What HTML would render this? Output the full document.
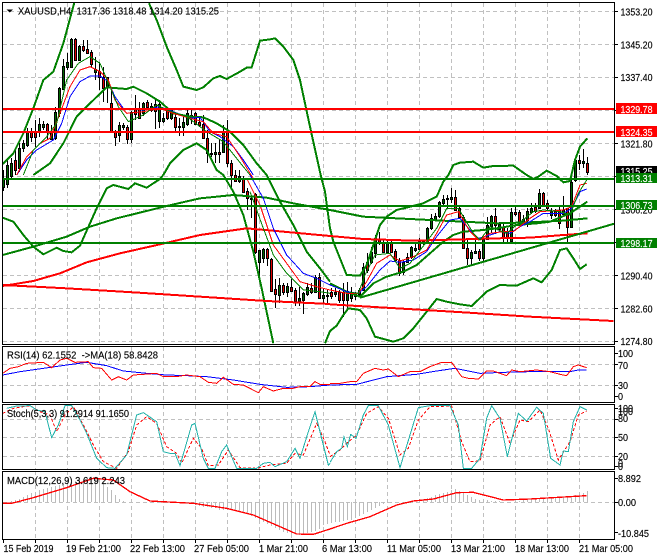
<!DOCTYPE html>
<html><head><meta charset="utf-8"><title>XAUUSD,H4</title>
<style>
html,body{margin:0;padding:0;background:#fff}
svg{display:block}
text{font-family:"Liberation Sans",sans-serif;font-size:10.5px;fill:#000;stroke:#000;stroke-width:.15px}
text.w{fill:#fff;stroke:#fff}
</style></head><body>
<svg xmlns="http://www.w3.org/2000/svg" width="660" height="560" viewBox="0 0 660 560">
<defs>
<clipPath id="cm"><rect x="3" y="3" width="611" height="341"/></clipPath>
<clipPath id="cr"><rect x="3" y="347" width="611" height="55"/></clipPath>
<clipPath id="cs"><rect x="3" y="405" width="611" height="64"/></clipPath>
<clipPath id="cd"><rect x="3" y="471" width="611" height="68"/></clipPath>
</defs>
<rect width="660" height="560" fill="#fff"/>
<!-- grid -->
<g stroke="#c0c0c0" stroke-width="1" stroke-dasharray="4 3" shape-rendering="crispEdges" fill="none">
<path d="M3 11.5H614M3 44.5H614M3 77.5H614M3 110.5H614M3 143.5H614M3 176.5H614M3 209.5H614M3 242.5H614M3 275.5H614M3 308.5H614M3 341.5H614"/>
<path d="M3 364.5H614M3 385.5H614M3 419.5H614M3 437.5H614M3 456.5H614M3 502.5H614"/>
<path d="M35.5 3V344M67.5 3V344M99.5 3V344M131.5 3V344M163.5 3V344M195.5 3V344M227.5 3V344M259.5 3V344M291.5 3V344M323.5 3V344M355.5 3V344M387.5 3V344M419.5 3V344M451.5 3V344M483.5 3V344M515.5 3V344M547.5 3V344M579.5 3V344"/>
<path d="M35.5 347V402M67.5 347V402M99.5 347V402M131.5 347V402M163.5 347V402M195.5 347V402M227.5 347V402M259.5 347V402M291.5 347V402M323.5 347V402M355.5 347V402M387.5 347V402M419.5 347V402M451.5 347V402M483.5 347V402M515.5 347V402M547.5 347V402M579.5 347V402"/>
<path d="M35.5 405V469M67.5 405V469M99.5 405V469M131.5 405V469M163.5 405V469M195.5 405V469M227.5 405V469M259.5 405V469M291.5 405V469M323.5 405V469M355.5 405V469M387.5 405V469M419.5 405V469M451.5 405V469M483.5 405V469M515.5 405V469M547.5 405V469M579.5 405V469"/>
<path d="M35.5 471V539M67.5 471V539M99.5 471V539M131.5 471V539M163.5 471V539M195.5 471V539M227.5 471V539M259.5 471V539M291.5 471V539M323.5 471V539M355.5 471V539M387.5 471V539M419.5 471V539M451.5 471V539M483.5 471V539M515.5 471V539M547.5 471V539M579.5 471V539"/>
</g>
<g clip-path="url(#cm)">
<!-- wicks -->
<path shape-rendering="crispEdges" stroke="#000" stroke-width="1" fill="none" d="M3.5 170V191M7.5 160V188M11.5 158V178M15.5 150V175M19.5 143V172M23.5 140V152M27.5 128V147M31.5 128V142M35.5 120V147M39.5 118V137M43.5 121V130M47.5 123V140M51.5 125V140M55.5 107V140M59.5 87V117M63.5 59V90M67.5 53V70M71.5 38V68M75.5 38V61M79.5 45V61M83.5 40V52M87.5 40V54M91.5 50V68M95.5 57V80M99.5 62V90M103.5 67V102M107.5 77V103M111.5 87V132M115.5 130V146M119.5 122V142M123.5 123V130M127.5 125V144M131.5 111V143M135.5 95V120M139.5 102V119M143.5 102V116M147.5 100V110M151.5 103V112M155.5 100V129M159.5 100V128M163.5 113V123M167.5 108V120M171.5 108V120M175.5 113V133M179.5 118V136M183.5 117V136M187.5 110V126M191.5 110V124M195.5 112V125M199.5 117V127M203.5 115V138M207.5 130V163M211.5 143V157M215.5 143V163M219.5 140V163M223.5 125V153M227.5 120V167M231.5 160V188M235.5 170V182M239.5 170V183M243.5 176V193M247.5 188V210M251.5 195V218M255.5 193V254M259.5 250V278M263.5 248V263M267.5 248V266M271.5 258V292M275.5 279V308M279.5 278V303M283.5 283V295M287.5 283V297M291.5 279V292M295.5 288V306M299.5 287V306M303.5 292V314M307.5 283V296M311.5 283V294M315.5 275V293M319.5 273V299M323.5 288V304M327.5 290V304M331.5 288V299M335.5 288V297M339.5 290V303M343.5 283V317M347.5 282V308M351.5 287V302M355.5 292V300M359.5 288V296M363.5 263V291M367.5 253V273M371.5 247V264M375.5 235V258M379.5 232V245M383.5 240V253M387.5 240V253M391.5 240V253M395.5 249V262M399.5 258V276M403.5 260V275M407.5 253V263M411.5 246V259M415.5 244V252M419.5 238V250M423.5 240V245M427.5 227V244M431.5 214V230M435.5 213V221M439.5 201V218M443.5 195V207M447.5 195V208M451.5 188V203M455.5 190V211M459.5 207V219M463.5 215V249M467.5 240V265M471.5 250V265M475.5 240V254M479.5 249V261M483.5 237V261M487.5 217V240M491.5 215V233M495.5 208V234M499.5 222V232M503.5 224V243M507.5 228V243M511.5 208V243M515.5 207V216M519.5 210V226M523.5 215V225M527.5 208V227M531.5 203V214M535.5 203V213M539.5 189V209M543.5 192V207M547.5 200V211M551.5 208V219M555.5 209V217M559.5 207V229M563.5 196V216M567.5 208V242M571.5 177V228M575.5 159V182M579.5 155V170M583.5 149V168M587.5 157V175"/>
<!-- up bodies -->
<path shape-rendering="crispEdges" stroke="#000" stroke-width="1" fill="#006400" d="M2.5 179.5h2v8h-2zM6.5 165.5h2v19h-2zM10.5 163.5h2v13h-2zM18.5 148.5h2v20h-2zM22.5 143.5h2v5h-2zM26.5 131.5h2v14h-2zM38.5 124.5h2v8h-2zM42.5 124.5h2v3h-2zM50.5 131.5h2v8h-2zM54.5 112.5h2v26h-2zM58.5 88.5h2v25h-2zM62.5 66.5h2v23h-2zM66.5 62.5h2v5h-2zM70.5 39.5h2v28h-2zM78.5 46.5h2v14h-2zM94.5 69.5h2v3h-2zM106.5 77.5h2v10h-2zM118.5 125.5h2v10h-2zM122.5 125.5h2v2h-2zM130.5 112.5h2v27h-2zM142.5 103.5h2v10h-2zM150.5 106.5h2v4h-2zM158.5 104.5h2v17h-2zM162.5 118.5h2v3h-2zM170.5 110.5h2v8h-2zM178.5 126.5h2v1h-2zM182.5 122.5h2v5h-2zM186.5 113.5h2v11h-2zM190.5 115.5h2v2h-2zM210.5 153.5h2v1h-2zM214.5 152.5h2v2h-2zM222.5 132.5h2v20h-2zM238.5 176.5h2v5h-2zM250.5 198.5h2v1h-2zM258.5 250.5h2v12h-2zM262.5 249.5h2v9h-2zM278.5 285.5h2v10h-2zM286.5 286.5h2v6h-2zM298.5 298.5h2v3h-2zM302.5 293.5h2v7h-2zM306.5 287.5h2v7h-2zM314.5 277.5h2v15h-2zM322.5 295.5h2v3h-2zM326.5 295.5h2v1h-2zM334.5 292.5h2v2h-2zM346.5 291.5h2v9h-2zM350.5 292.5h2v6h-2zM354.5 294.5h2v2h-2zM358.5 290.5h2v4h-2zM362.5 267.5h2v23h-2zM370.5 252.5h2v10h-2zM374.5 238.5h2v15h-2zM386.5 243.5h2v9h-2zM402.5 262.5h2v10h-2zM406.5 257.5h2v5h-2zM410.5 247.5h2v10h-2zM414.5 248.5h2v2h-2zM422.5 241.5h2v2h-2zM426.5 228.5h2v15h-2zM430.5 218.5h2v10h-2zM434.5 216.5h2v4h-2zM438.5 202.5h2v14h-2zM442.5 199.5h2v4h-2zM446.5 198.5h2v1h-2zM450.5 197.5h2v2h-2zM470.5 252.5h2v6h-2zM474.5 251.5h2v2h-2zM482.5 239.5h2v19h-2zM486.5 225.5h2v14h-2zM490.5 216.5h2v10h-2zM498.5 224.5h2v5h-2zM510.5 212.5h2v29h-2zM522.5 219.5h2v4h-2zM526.5 211.5h2v9h-2zM530.5 208.5h2v4h-2zM538.5 193.5h2v15h-2zM550.5 211.5h2v4h-2zM562.5 210.5h2v4h-2zM570.5 182.5h2v45h-2zM574.5 160.5h2v20h-2zM582.5 161.5h2v2h-2z"/>
<!-- down bodies -->
<path shape-rendering="crispEdges" stroke="#000" stroke-width="1" fill="#e00000" d="M14.5 160.5h2v10h-2zM30.5 131.5h2v6h-2zM34.5 132.5h2v5h-2zM46.5 124.5h2v8h-2zM74.5 39.5h2v21h-2zM82.5 46.5h2v4h-2zM86.5 49.5h2v4h-2zM90.5 52.5h2v12h-2zM98.5 71.5h2v6h-2zM102.5 77.5h2v11h-2zM110.5 103.5h2v28h-2zM114.5 131.5h2v6h-2zM126.5 127.5h2v12h-2zM134.5 108.5h2v6h-2zM138.5 108.5h2v10h-2zM146.5 102.5h2v5h-2zM154.5 104.5h2v7h-2zM166.5 109.5h2v9h-2zM174.5 117.5h2v10h-2zM194.5 113.5h2v11h-2zM198.5 122.5h2v3h-2zM202.5 124.5h2v14h-2zM206.5 138.5h2v15h-2zM218.5 152.5h2v2h-2zM226.5 132.5h2v31h-2zM230.5 163.5h2v12h-2zM234.5 175.5h2v6h-2zM242.5 178.5h2v14h-2zM246.5 191.5h2v7h-2zM254.5 194.5h2v58h-2zM266.5 249.5h2v9h-2zM270.5 259.5h2v32h-2zM274.5 289.5h2v5h-2zM282.5 285.5h2v7h-2zM290.5 287.5h2v4h-2zM294.5 290.5h2v11h-2zM310.5 288.5h2v4h-2zM318.5 277.5h2v21h-2zM330.5 292.5h2v4h-2zM338.5 292.5h2v8h-2zM342.5 292.5h2v8h-2zM366.5 262.5h2v8h-2zM378.5 239.5h2v4h-2zM382.5 243.5h2v9h-2zM390.5 243.5h2v9h-2zM394.5 251.5h2v9h-2zM398.5 260.5h2v13h-2zM418.5 241.5h2v8h-2zM454.5 197.5h2v13h-2zM458.5 208.5h2v9h-2zM462.5 217.5h2v31h-2zM466.5 248.5h2v10h-2zM478.5 251.5h2v7h-2zM494.5 216.5h2v9h-2zM502.5 227.5h2v11h-2zM506.5 232.5h2v6h-2zM514.5 212.5h2v2h-2zM518.5 212.5h2v11h-2zM534.5 207.5h2v4h-2zM542.5 193.5h2v12h-2zM546.5 203.5h2v5h-2zM554.5 211.5h2v4h-2zM558.5 210.5h2v13h-2zM566.5 208.5h2v19h-2zM578.5 160.5h2v3h-2zM586.5 163.5h2v9h-2z"/>
<!-- indicators -->
<g fill="none" shape-rendering="crispEdges">
<g transform="scale(.33333)">
<polyline stroke="#008000" stroke-width="6" points="8,492 40,460 70,400 100,325 130,240 160,215 190,130 225,0"/>
<polyline stroke="#008000" stroke-width="6" points="447,10 470,60 500,140 530,210 550,260 590,270 610,262 640,235 660,228 680,237 720,215 740,203 755,202 780,122 810,118 825,115 850,140 880,180 900,240 930,380 962,525 975,575 990,685"/>
<polyline stroke="#008000" stroke-width="6" points="100,525 150,490 190,430 230,350 270,310 320,262 380,267 400,260 440,280 480,305 520,340 570,350 610,352 650,370 690,395 730,435 770,490 800,525"/>
<polyline stroke="#008000" stroke-width="6" points="490,525 510,490 550,450 590,430 620,450 650,510 670,525"/>
<polyline stroke="#0000ff" stroke-width="3" points="50,525 80,480 110,450 160,420 185,370 210,290 240,245 270,228 300,228 325,245 345,290 370,325 430,330 480,320 520,335 570,355 600,352 630,395 660,410 700,440 730,480 760,525"/>
<polyline stroke="#ff0000" stroke-width="3" points="50,525 80,470 120,430 150,415 180,340 210,260 240,210 270,200 300,215 325,240 345,300 380,340 430,335 480,325 520,340 570,355 610,365 640,400 680,410 720,470 750,520 760,535"/>
<polyline stroke="#008000" stroke-width="3" points="70,525 100,450 140,410 170,370 200,240 235,190 270,170 300,190 330,260 355,320 385,365 430,345 470,315 500,330 560,350 620,395 670,425 730,500 750,525"/>
</g>
<g transform="translate(0,175) scale(.33333)">
<polyline stroke="#008000" stroke-width="6" points="8,128 40,140 70,180 100,215 130,238 170,218 190,228 215,232 240,212 290,100 320,40 340,30 385,42 405,25 440,38 480,12 490,0"/>
<polyline stroke="#008000" stroke-width="6" points="670,0 700,50 730,120 760,230 785,340 820,505"/>
<polyline stroke="#008000" stroke-width="6" points="800,0 840,80 880,150 920,230 960,280 990,320"/>
<polyline stroke="#008000" stroke-width="6" points="8,240 100,215 200,185 270,155 350,130 500,93 600,70 700,60 800,68 880,85 990,105"/>
<polyline stroke="#ff0000" stroke-width="6" points="8,333 100,318 180,295 260,262 360,235 480,208 600,180 740,160 850,170 990,183"/>
<polyline stroke="#ff0000" stroke-width="6" points="8,330 200,340 400,352 600,365 800,378 990,387"/>
<polyline stroke="#0000ff" stroke-width="3" points="750,0 790,70 820,160 860,240 910,295 950,310 990,330"/>
<polyline stroke="#ff0000" stroke-width="3" points="740,10 780,90 820,210 860,265 900,320 950,335 990,345"/>
<polyline stroke="#008000" stroke-width="3" points="750,50 790,160 820,240 860,295 910,345 960,350 990,355"/>
</g>
<g transform="translate(330,0) scale(.33333)">
<polyline stroke="#008000" stroke-width="6" points="0,685 10,725 30,775 50,825 90,827 110,795 130,735 150,675 170,650 200,630 240,620 280,610 320,590 340,545 355,525 370,495 390,488 430,485 460,503 490,498 550,497 590,525 610,537 625,530 650,512 680,528 700,547 720,543 735,480 750,440 772,415"/>
</g>
<g transform="translate(330,175) scale(.33333)">
<polyline stroke="#008000" stroke-width="6" points="-15,505 0,468 20,452 40,420 55,400 90,405 110,430 135,485 190,500 220,490 250,460 290,410 320,372 350,380 390,388 425,393 470,350 510,330 560,332 610,310 635,322 665,285 690,225 710,220 730,250 750,282 770,268"/>
<polyline stroke="#008000" stroke-width="6" points="0,325 50,350 90,365 130,325 170,305 220,290 260,270 300,235 340,200 370,180 400,170 460,165 500,160 560,150 620,145 660,140 720,115 772,80"/>
<polyline stroke="#008000" stroke-width="6" points="0,105 100,125 200,130 300,135 400,140 500,145 600,142 700,137 772,130"/>
<polyline stroke="#ff0000" stroke-width="6" points="0,183 100,192 250,197 400,193 500,190 600,188 700,180 772,175"/>
<polyline stroke="#ff0000" stroke-width="6" points="0,388 200,400 400,412 600,425 850,438"/>
<polyline stroke="#008000" stroke-width="6" points="90,368 853,146"/>
<polyline stroke="#0000ff" stroke-width="3" points="0,330 50,350 85,355 110,335 150,285 180,258 210,262 250,255 290,230 320,185 360,135 390,130 420,165 445,190 480,180 510,170 540,175 570,155 600,140 640,115 700,115 725,100 750,50 770,42"/>
<polyline stroke="#ff0000" stroke-width="3" points="0,345 50,355 85,355 110,320 140,265 180,240 210,258 250,245 290,225 320,175 350,120 385,110 420,170 445,195 480,175 520,170 550,170 600,130 630,110 700,105 725,95 750,30 770,25"/>
<polyline stroke="#008000" stroke-width="3" points="60,352 85,355 105,300 135,240 180,235 210,280 240,265 290,200 320,160 350,100 385,100 430,175 450,195 480,155 530,175 560,150 610,110 640,105 690,110 720,120 745,55 770,15"/>
</g>
</g>
<!-- horizontal levels -->
<g shape-rendering="crispEdges" stroke-width="2" fill="none">
<path stroke="#ff0000" d="M3 109H614M3 132H614"/>
<path stroke="#008000" d="M3 179H614M3 206H614M3 243H614"/>
</g>
</g>
<!-- RSI -->
<g clip-path="url(#cr)" fill="none" shape-rendering="crispEdges">
<g transform="translate(0,345) scale(.33333)" stroke-width="3">
<polyline stroke="#0000ff" points="8,90 60,80 130,70 200,60 260,52 320,62 370,78 440,85 500,90 560,92 620,95 700,105 780,118 860,127 930,125 990,120"/>
<polyline stroke="#ff0000" points="8,85 30,70 55,65 80,55 130,52 155,68 180,45 200,40 225,52 265,50 280,68 305,70 335,105 355,95 380,105 400,90 430,88 470,85 490,95 530,95 560,90 600,95 625,112 650,115 670,97 700,118 730,120 775,143 790,125 820,138 850,130 880,130 900,125 930,125 945,110 960,118 990,118"/>
</g>
<g transform="translate(330,345) scale(.33333)" stroke-width="3">
<polyline stroke="#0000ff" points="0,120 80,118 170,95 260,88 320,78 375,70 450,85 520,82 600,80 720,80 745,75 770,75"/>
<polyline stroke="#ff0000" points="0,115 30,115 60,110 80,110 100,85 135,70 160,75 175,72 205,95 240,80 270,80 300,65 335,52 365,52 395,95 415,100 445,102 470,78 490,78 530,92 545,75 570,80 620,75 660,80 690,88 710,92 730,65 745,60 770,68"/>
</g>
</g>
<!-- Stoch -->
<g clip-path="url(#cs)" fill="none" shape-rendering="crispEdges">
<g transform="translate(0,345) scale(.33333)" stroke-width="3">
<polyline stroke="#ff0000" stroke-dasharray="9 6" points="8,205 40,190 90,182 120,200 150,210 170,260 195,210 220,185 250,240 280,300 310,350 350,370 385,320 410,240 440,215 470,235 500,305 530,325 545,355 580,280 605,310 625,362 655,360 685,315 720,368 770,370 810,360 860,355 885,325 910,330 950,235 975,290 990,330"/>
<polyline stroke="#20b2aa" points="20,190 50,183 90,182 110,195 135,200 155,278 175,240 195,182 215,182 240,225 260,265 290,340 320,368 345,370 380,330 410,210 430,203 470,230 490,320 510,325 525,325 540,362 575,240 585,235 610,340 625,370 645,370 665,320 680,300 710,370 770,370 790,355 810,352 825,365 860,350 885,310 900,340 925,260 945,200 965,280 985,360 990,355"/>
</g>
<g transform="translate(330,345) scale(.33333)" stroke-width="3">
<polyline stroke="#ff0000" stroke-dasharray="9 6" points="0,335 30,315 50,295 80,270 110,205 145,185 175,220 210,330 235,310 265,225 300,185 365,183 395,290 420,350 450,348 480,240 510,215 540,295 570,225 595,230 630,195 655,250 685,345 720,290 745,210 770,198"/>
<polyline stroke="#20b2aa" points="0,352 20,320 35,310 42,275 52,305 62,268 78,280 100,210 115,182 145,182 175,240 210,368 240,270 265,188 300,182 360,182 385,240 400,370 425,370 450,340 470,220 485,182 510,220 532,335 565,205 590,228 620,187 640,205 662,340 690,360 700,318 715,320 730,230 750,185 770,195"/>
</g>
</g>
<!-- MACD -->
<g clip-path="url(#cd)" fill="none" shape-rendering="crispEdges">
<path stroke="#bbbbbb" stroke-width="1" d="M11.5 502V501M15.5 502V500M19.5 502V499M23.5 502V497M27.5 502V495M31.5 502V493M35.5 502V492M39.5 502V490M43.5 502V489M47.5 502V488M51.5 502V487M55.5 502V486M59.5 502V485M63.5 502V484M67.5 502V483M71.5 502V482M75.5 502V481M79.5 502V480M83.5 502V479M87.5 502V478M91.5 502V478M95.5 502V478M99.5 502V478M103.5 502V482M107.5 502V487M111.5 502V490M115.5 502V495M119.5 502V499M123.5 502V501M191.5 502V503M195.5 502V505M199.5 502V506M203.5 502V507M207.5 502V507M211.5 502V508M215.5 502V508M219.5 502V510M223.5 502V510M227.5 502V510M231.5 502V510M235.5 502V511M239.5 502V512M243.5 502V513M247.5 502V514M251.5 502V516M255.5 502V518M259.5 502V520M263.5 502V522M267.5 502V524M271.5 502V526M275.5 502V528M279.5 502V530M283.5 502V532M287.5 502V533M291.5 502V534M295.5 502V534M299.5 502V535M303.5 502V534M307.5 502V533M311.5 502V532M315.5 502V531M319.5 502V529M323.5 502V525M327.5 502V524M331.5 502V523M335.5 502V522M339.5 502V522M343.5 502V521M347.5 502V520M351.5 502V520M355.5 502V518M359.5 502V516M363.5 502V514M367.5 502V512M371.5 502V510M375.5 502V508M379.5 502V506M383.5 502V504M387.5 502V503M391.5 502V503M395.5 502V503M423.5 502V499M427.5 502V498M431.5 502V497M435.5 502V495M439.5 502V494M443.5 502V493M447.5 502V492M451.5 502V490M455.5 502V489M459.5 502V491M463.5 502V493M467.5 502V495M471.5 502V497M475.5 502V499M479.5 502V500M483.5 502V500M487.5 502V500M491.5 502V501M495.5 502V501M499.5 502V501M515.5 502V501M519.5 502V501M523.5 502V500M527.5 502V499M531.5 502V499M535.5 502V498M539.5 502V498M543.5 502V498M547.5 502V498M551.5 502V498M555.5 502V497M559.5 502V497M563.5 502V497M567.5 502V497M571.5 502V496M575.5 502V495M579.5 502V494M583.5 502V493M587.5 502V491"/>
<g transform="translate(0,345) scale(.33333)" stroke-width="4" stroke="#ff0000">
<polyline points="8,475 35,475 100,458 200,428 280,400 340,405 390,440 450,468 580,475 680,490 760,510 840,545 890,567 940,568 990,552"/>
</g>
<g transform="translate(330,345) scale(.33333)" stroke-width="4" stroke="#ff0000">
<polyline points="0,552 50,535 120,515 200,480 250,468 310,462 380,443 430,442 520,465 600,462 770,452"/>
</g>
</g>
<!-- frames -->
<g shape-rendering="crispEdges" fill="none" stroke="#000" stroke-width="1">
<rect x="2.5" y="2.5" width="612" height="342"/>
<rect x="2.5" y="346.5" width="612" height="56"/>
<rect x="2.5" y="404.5" width="612" height="65"/>
<rect x="2.5" y="471.5" width="612" height="68"/>
<path d="M615 11.5h3M615 44.5h3M615 77.5h3M615 110.5h3M615 143.5h3M615 176.5h3M615 209.5h3M615 242.5h3M615 275.5h3M615 308.5h3M615 341.5h3M615 353.5h3M615 364.5h3M615 385.5h3M615 396.5h3M615 408.5h3M615 419.5h3M615 437.5h3M615 456.5h3M615 466.5h3M615 478.5h3M615 502.5h3M615 532.5h3"/>
<path d="M3.5 540v3M35.5 540v3M67.5 540v3M99.5 540v3M131.5 540v3M163.5 540v3M195.5 540v3M227.5 540v3M259.5 540v3M291.5 540v3M323.5 540v3M355.5 540v3M387.5 540v3M419.5 540v3M451.5 540v3M483.5 540v3M515.5 540v3M547.5 540v3M579.5 540v3"/>
</g>
<!-- header labels -->
<path d="M6.5 9.5h6.5l-3.25 3z" fill="#000"/>
<text x="18" y="14.5" textLength="201" lengthAdjust="spacingAndGlyphs" xml:space="preserve">XAUUSD,H4  1317.36 1318.48 1314.20 1315.25</text>
<text x="7" y="358.5" textLength="151" lengthAdjust="spacingAndGlyphs" xml:space="preserve">RSI(14) 62.1552  -&gt;MA(18) 58.8428</text>
<text x="7" y="417" textLength="122" lengthAdjust="spacingAndGlyphs">Stoch(5,3,3) 91.2914 91.1650</text>
<text x="7" y="484" textLength="118" lengthAdjust="spacingAndGlyphs">MACD(12,26,9) 3.619 2.243</text>
<!-- right axis -->
<text x="620.5" y="15.5" textLength="32" lengthAdjust="spacingAndGlyphs">1353.20</text>
<text x="620.5" y="48.5" textLength="32" lengthAdjust="spacingAndGlyphs">1345.20</text>
<text x="620.5" y="81" textLength="32" lengthAdjust="spacingAndGlyphs">1337.40</text>
<text x="620.5" y="147.5" textLength="32" lengthAdjust="spacingAndGlyphs">1321.80</text>
<text x="620.5" y="213.5" textLength="32" lengthAdjust="spacingAndGlyphs">1306.20</text>
<text x="620.5" y="279.5" textLength="32" lengthAdjust="spacingAndGlyphs">1290.40</text>
<text x="620.5" y="312.5" textLength="32" lengthAdjust="spacingAndGlyphs">1282.60</text>
<text x="620.5" y="345" textLength="32" lengthAdjust="spacingAndGlyphs">1274.80</text>
<g shape-rendering="crispEdges">
<rect x="616" y="103" width="41" height="11" fill="#ff0000"/>
<rect x="616" y="126" width="41" height="11" fill="#ff0000"/>
<rect x="616" y="166" width="41" height="8" fill="#000"/>
</g>
<text class="w" x="620.5" y="113" textLength="32" lengthAdjust="spacingAndGlyphs">1329.78</text>
<text class="w" x="620.5" y="136" textLength="32" lengthAdjust="spacingAndGlyphs">1324.35</text>
<text class="w" x="620.5" y="175" textLength="32" lengthAdjust="spacingAndGlyphs">1315.25</text>
<g shape-rendering="crispEdges">
<rect x="616" y="173" width="41" height="10" fill="#008000"/>
<rect x="616" y="200" width="41" height="10" fill="#008000"/>
<rect x="616" y="238" width="41" height="10" fill="#008000"/>
</g>
<text class="w" x="620.5" y="182" textLength="32" lengthAdjust="spacingAndGlyphs">1313.31</text>
<text class="w" x="620.5" y="209" textLength="32" lengthAdjust="spacingAndGlyphs">1306.73</text>
<text class="w" x="620.5" y="247" textLength="32" lengthAdjust="spacingAndGlyphs">1298.17</text>
<text x="618" y="357" textLength="15" lengthAdjust="spacingAndGlyphs">100</text>
<text x="618" y="369" textLength="10" lengthAdjust="spacingAndGlyphs">70</text>
<text x="618" y="389" textLength="10" lengthAdjust="spacingAndGlyphs">30</text>
<text x="618" y="400" textLength="5" lengthAdjust="spacingAndGlyphs">0</text>
<text x="618" y="412" textLength="15" lengthAdjust="spacingAndGlyphs">100</text>
<text x="618" y="415" textLength="15" lengthAdjust="spacingAndGlyphs">100</text>
<text x="618" y="422" textLength="10" lengthAdjust="spacingAndGlyphs">80</text>
<text x="618" y="441" textLength="10" lengthAdjust="spacingAndGlyphs">50</text>
<text x="618" y="460" textLength="10" lengthAdjust="spacingAndGlyphs">20</text>
<text x="618" y="467" textLength="5" lengthAdjust="spacingAndGlyphs">0</text>
<text x="618" y="470" textLength="5" lengthAdjust="spacingAndGlyphs">0</text>
<text x="618" y="482" textLength="23" lengthAdjust="spacingAndGlyphs">8.892</text>
<text x="618" y="506" textLength="18" lengthAdjust="spacingAndGlyphs">0.00</text>
<text x="618" y="537" textLength="31" lengthAdjust="spacingAndGlyphs">-10.845</text>
<!-- bottom axis -->
<text x="3.5" y="552" textLength="50" lengthAdjust="spacingAndGlyphs">15 Feb 2019</text>
<text x="66" y="552" textLength="55" lengthAdjust="spacingAndGlyphs">19 Feb 21:00</text>
<text x="130" y="552" textLength="55" lengthAdjust="spacingAndGlyphs">22 Feb 13:00</text>
<text x="194" y="552" textLength="55" lengthAdjust="spacingAndGlyphs">27 Feb 05:00</text>
<text x="259" y="552" textLength="49" lengthAdjust="spacingAndGlyphs">1 Mar 21:00</text>
<text x="322" y="552" textLength="50" lengthAdjust="spacingAndGlyphs">6 Mar 13:00</text>
<text x="387" y="552" textLength="54" lengthAdjust="spacingAndGlyphs">11 Mar 05:00</text>
<text x="451" y="552" textLength="54" lengthAdjust="spacingAndGlyphs">13 Mar 21:00</text>
<text x="515" y="552" textLength="54" lengthAdjust="spacingAndGlyphs">18 Mar 13:00</text>
<text x="579" y="552" textLength="54" lengthAdjust="spacingAndGlyphs">21 Mar 05:00</text>
</svg>
</body></html>
